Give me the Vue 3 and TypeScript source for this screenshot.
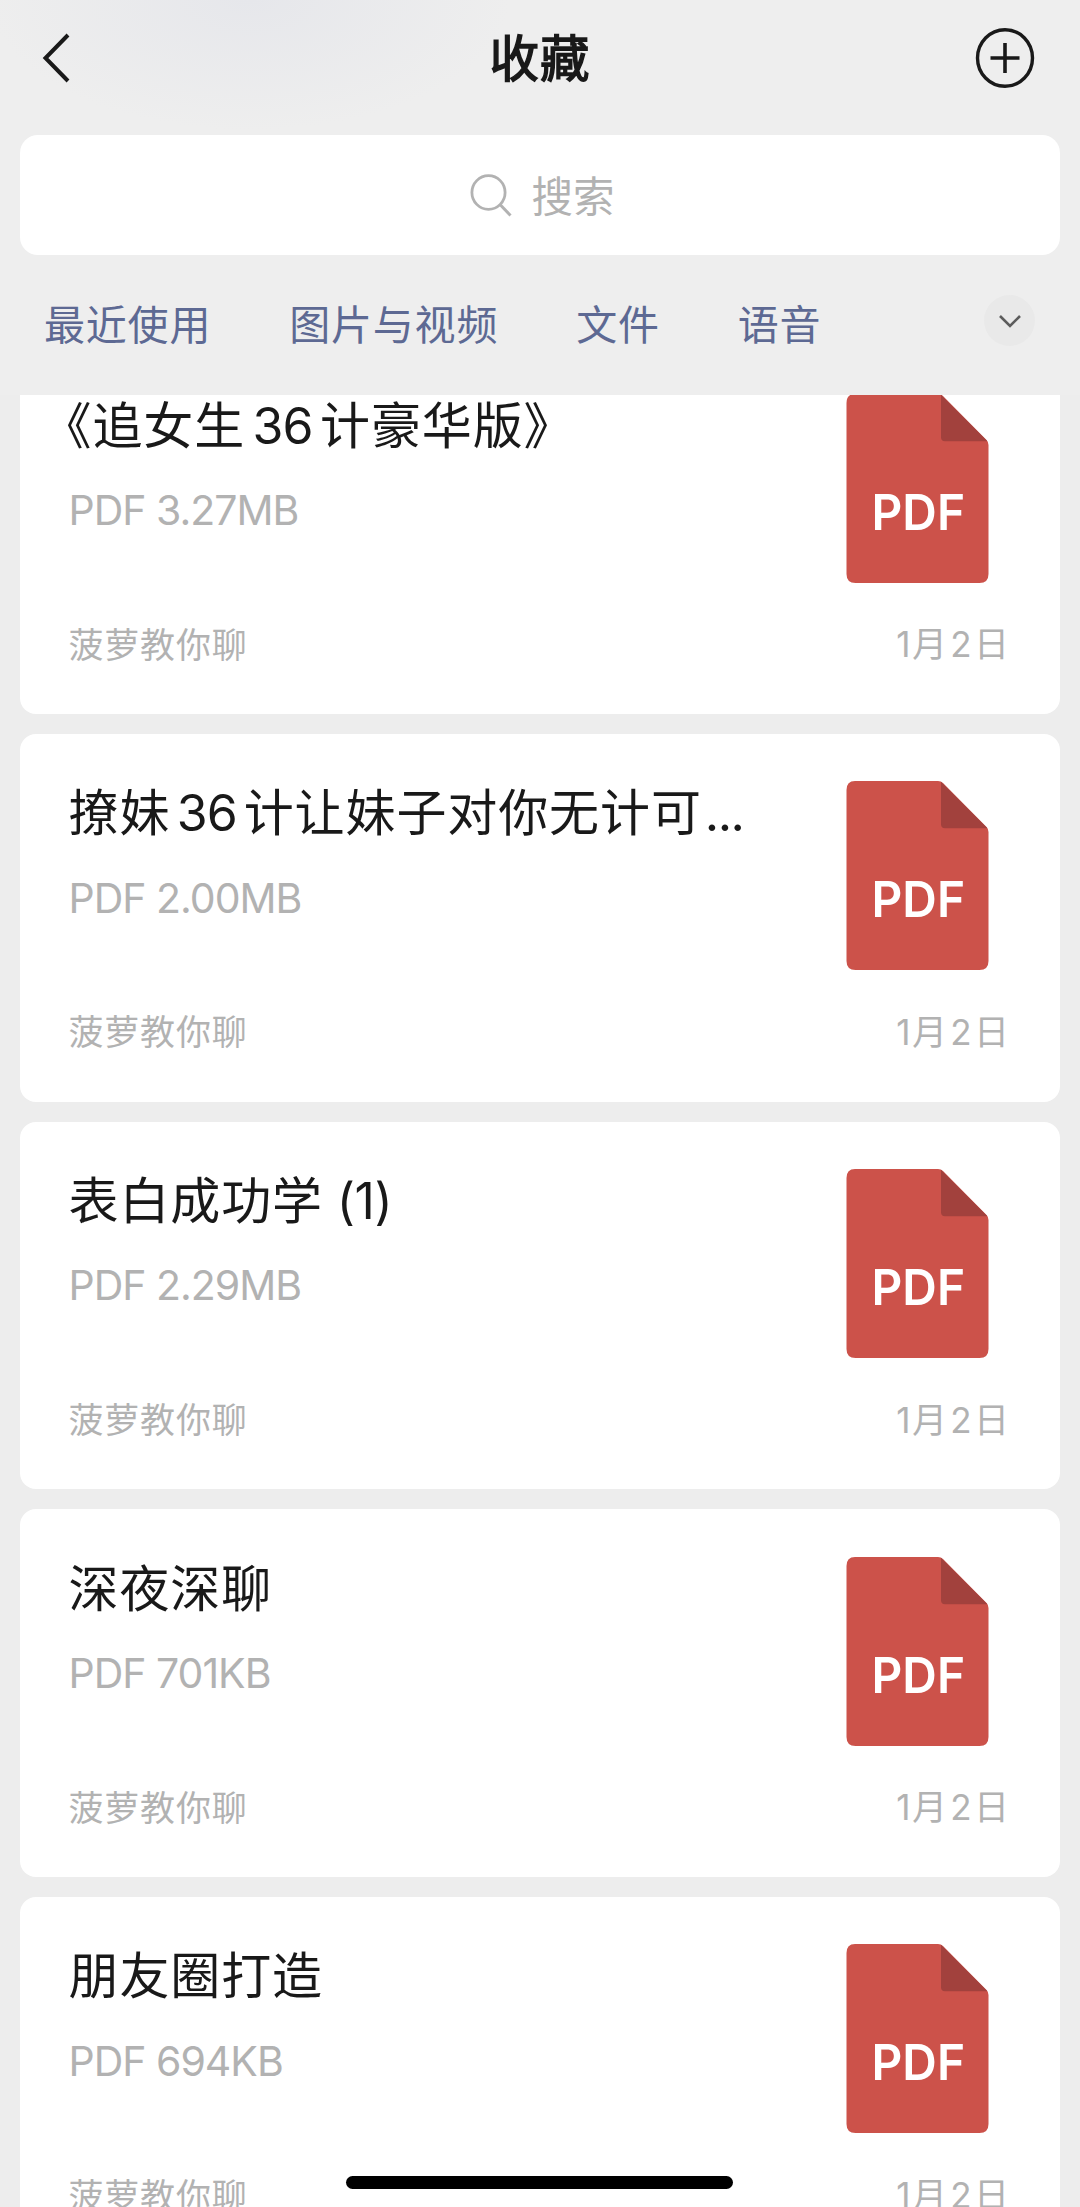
<script setup lang="ts">
interface TitlePart {
  text: string
  kind?: 'latin' | 'dots' | 'copy'
}

interface Favorite {
  title: TitlePart[]
  size: string
  quoted?: boolean
}

const tabs: string[] = ['最近使用', '图片与视频', '文件', '语音']
const source = '菠萝教你聊'

const favorites: Favorite[] = [
  {
    title: [{ text: '《追女生' }, { text: '36', kind: 'latin' }, { text: '计豪华版》' }],
    size: '3.27MB',
    quoted: true,
  },
  {
    title: [
      { text: '撩妹' },
      { text: '36', kind: 'latin' },
      { text: '计让妹子对你无计可' },
      { text: '...', kind: 'dots' },
    ],
    size: '2.00MB',
  },
  { title: [{ text: '表白成功学' }, { text: ' (1)', kind: 'copy' }], size: '2.29MB' },
  { title: [{ text: '深夜深聊' }], size: '701KB' },
  { title: [{ text: '朋友圈打造' }], size: '694KB' },
]
</script>

<template>
  <div class="screen">
    <header class="navbar">
      <svg class="back" width="32" height="56" viewBox="0 0 32 56">
        <path d="M27 5 4.5 28 27 51" fill="none" stroke="#191919" stroke-width="4" />
      </svg>
      <h1>收藏</h1>
      <svg class="add" width="60" height="62" viewBox="0 0 60 62">
        <ellipse cx="30" cy="31" rx="27.5" ry="28.3" fill="none" stroke="#191919" stroke-width="3.4" />
        <path d="M15.5 31H44.5M30 16V46" fill="none" stroke="#191919" stroke-width="3.6" />
      </svg>
    </header>

    <div class="search">
      <svg width="44" height="44" viewBox="0 0 44 44">
        <ellipse cx="19.5" cy="19.5" rx="16.6" ry="16.8" fill="none" stroke="#b2b2b2" stroke-width="2.8" />
        <path d="M31 31.5 41.500 42.500" fill="none" stroke="#b2b2b2" stroke-width="3" />
      </svg>
      <span>搜索</span>
    </div>

    <nav class="tabs">
      <span v-for="tab in tabs" :key="tab" class="tab">{{ tab }}</span>
      <span class="more">
        <svg width="24" height="14" viewBox="0 0 24 14">
          <path d="M2 2 12 12 22 2" fill="none" stroke="#5c5c5c" stroke-width="2.6" />
        </svg>
      </span>
    </nav>

    <main class="list">
      <article v-for="(item, i) in favorites" :key="i" class="card">
        <div class="body">
          <div class="info">
            <h2 :class="{ quoted: item.quoted }">
              <span v-for="(part, n) in item.title" :key="n" :class="part.kind">{{ part.text }}</span>
            </h2>
            <p>PDF {{ item.size }}</p>
          </div>
          <svg class="file" width="143" height="189" viewBox="0 0 143 189">
            <path d="M9 0H92Q95 0 97 2L140.500 46Q142.500 48 142.500 51V180Q142.500 189 133.500 189H9.500Q.5 189 .5 180V9Q.5 0 9 0Z" fill="#cc524a" />
            <path d="M95 .8 141.500 47.300H99Q95 47.300 95 43.300Z" fill="#a2413d" />
            <text x="25.500" y="135.500" textLength="93.500" lengthAdjust="spacingAndGlyphs">PDF</text>
          </svg>
        </div>
        <footer>
          <span class="source">{{ source }}</span>
          <span class="date">1<b>月</b><i>2</i>日</span>
        </footer>
      </article>
    </main>

    <div class="home-indicator"></div>
  </div>
</template>

<style>
body {
  margin: 0;
  background: #ededed;
}
</style>

<style scoped>
.screen {
  position: relative;
  box-sizing: border-box;
  width: 1080px;
  height: 2207px;
  overflow: hidden;
  display: flex;
  flex-direction: column;
  background: radial-gradient(ellipse 260px 130px at 250px 0, #e6e7eb, #eeeeee00), #eeeeee;
  color: #191919;
  font-family: Inter, "Noto Sans CJK SC", sans-serif;
}

.navbar {
  flex: none;
  height: 134.5px;
  display: flex;
  align-items: flex-start;
  justify-content: space-between;
  padding: 0 45px 0 41px;
  box-sizing: border-box;
}

.back {
  margin-top: 30px;
  margin-right: 28px;
}

.add {
  margin-top: 27px;
}

h1 {
  margin: 34px 0 0 4px;
  font-size: 49.500px;
  line-height: 50px;
  font-weight: 400;
  letter-spacing: 1px;
  -webkit-text-stroke: 1.500px #191919;
}

.search {
  flex: none;
  box-sizing: border-box;
  height: 120.5px;
  margin: 0 20px;
  padding: 1px 0 0 4px;
  border-radius: 18px;
  background: #fff;
  display: flex;
  align-items: center;
  justify-content: center;
  gap: 18px;
  color: #b2b2b2;
  font-size: 41.5px;
  line-height: 50px;
}

.search span {
  padding-top: 3px;
}

.tabs {
  flex: none;
  height: 140px;
  box-sizing: border-box;
  padding: 40px 45px 0 44px;
  display: flex;
  align-items: flex-start;
  color: #5d6993;
  font-size: 41px;
  line-height: 50px;
  letter-spacing: 0.8px;
}

.tab {
  margin-top: 5px;
  margin-right: 78px;
}

.more {
  width: 51px;
  height: 51px;
  margin-left: auto;
  border-radius: 50%;
  background: #e9e9e9;
  display: flex;
  align-items: center;
  justify-content: center;
}

.list {
  flex: 1;
  min-height: 0;
  overflow: hidden;
  padding: 0 20px;
  background: #ededed;
}

.card {
  box-sizing: border-box;
  height: 367.5px;
  margin-bottom: 20.2px;
  padding: 47.4px 52px 0 48.500px;
  border-radius: 16px;
  background: #fff;
}

.card:first-child {
  margin-top: -48.700px;
}

.body {
  display: flex;
  justify-content: space-between;
  height: 230.600px;
  padding-right: 19px;
}

.info {
  padding-top: 6.800px;
}

h2 {
  margin: 0;
  font-size: 50px;
  line-height: 50px;
  font-weight: 400;
  letter-spacing: 0.9px;
  white-space: pre;
}

h2.quoted {
  margin-left: -27px;
}

.latin {
  margin: 0 7px 0 6.500px;
  letter-spacing: -1px;
}

.quoted .latin {
  margin: 0 7.500px;
}

.dots {
  margin-left: 3px;
  letter-spacing: -1.500px;
}

.copy {
  letter-spacing: -0.4px;
}

p {
  margin: 34.600px 0 0;
  color: #b2b2b2;
  font-size: 41px;
  line-height: 50px;
  letter-spacing: -1px;
}

.file {
  flex: none;
}

.file text {
  fill: #fff;
  font-size: 49.500px;
  font-weight: 600;
}

footer {
  display: flex;
  justify-content: space-between;
  color: #b2b2b2;
  font-size: 35px;
  line-height: 40px;
}

.source {
  padding-top: 0.5px;
  letter-spacing: 0.8px;
}

.date {
  margin-right: -1px;
}

.date b {
  margin-left: 1.500px;
  font-weight: 400;
}

.date i {
  margin: 0 2.500px 0 3px;
  font-style: normal;
}

.home-indicator {
  position: absolute;
  left: 346px;
  bottom: 18px;
  width: 387px;
  height: 13px;
  border-radius: 7px;
  background: #000;
}
</style>
